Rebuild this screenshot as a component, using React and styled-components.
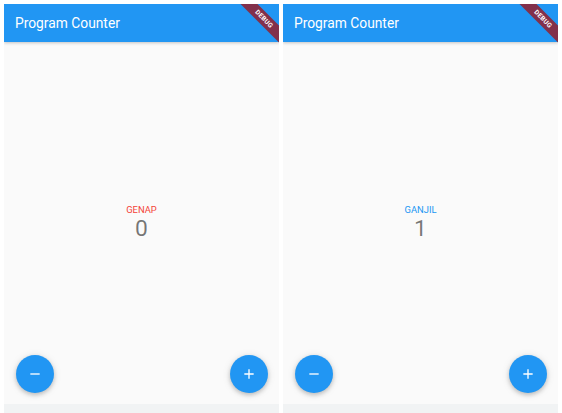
import styled, { createGlobalStyle } from 'styled-components';

const GlobalStyle = createGlobalStyle`
  html, body {
    margin: 0;
    padding: 0;
    background: #ffffff;
    font-family: Roboto, "Noto Sans", sans-serif;
  }
`;

const Screen = styled.div`
  display: flex;
  gap: 4px;
  padding: 4px 4px 0 4px;
  width: 562px;
  height: 413px;
  box-sizing: border-box;
  overflow: hidden;
`;

const Phone = styled.div`
  position: relative;
  width: 275px;
  height: 409px;
  display: flex;
  flex-direction: column;
  overflow: hidden;
  background: #fafafa;
`;

const AppBar = styled.div`
  height: 38px;
  flex-shrink: 0;
  display: flex;
  align-items: center;
  padding-left: 11px;
  background: #2196f3;
  color: #fff;
  font-size: 13.8px;
  font-weight: 400;
  box-shadow: 0 1px 3px rgba(0, 0, 0, 0.22);
  position: relative;
  z-index: 1;
`;

const Body = styled.div`
  position: relative;
  flex: 1;
  display: flex;
  flex-direction: column;
  align-items: center;
  justify-content: center;
`;

const Label = styled.div`
  font-size: 9.4px;
  line-height: 11px;
  color: ${(p) => p.color};
`;

const Count = styled.div`
  font-size: 22.8px;
  line-height: 27px;
  color: rgba(0, 0, 0, 0.54);
`;

const Fab = styled.button`
  position: absolute;
  bottom: 11px;
  ${(p) => (p.side === 'left' ? 'left: 12px;' : 'right: 11px;')}
  width: 38px;
  height: 38px;
  border-radius: 50%;
  border: none;
  padding: 0;
  background: #2196f3;
  display: flex;
  align-items: center;
  justify-content: center;
  box-shadow: 0 2px 4px rgba(0, 0, 0, 0.2), 0 1px 8px rgba(0, 0, 0, 0.1);
`;

const NavStrip = styled.div`
  height: 9px;
  flex-shrink: 0;
  background: #f1f3f4;
`;

const Banner = styled.div`
  position: absolute;
  z-index: 2;
  left: 220px;
  top: 9px;
  width: 80px;
  height: 12px;
  transform: rotate(45deg);
  background: #82304b;
  color: #fff;
  font-size: 6.6px;
  font-weight: 700;
  letter-spacing: 0.2px;
  display: flex;
  align-items: center;
  justify-content: center;
`;

const Minus = () => (
  <svg width="16" height="16" viewBox="0 0 24 24" fill="#fff">
    <path d="M19 13H5v-2h14v2z" />
  </svg>
);

const Plus = () => (
  <svg width="16" height="16" viewBox="0 0 24 24" fill="#fff">
    <path d="M19 13h-6v6h-2v-6H5v-2h6V5h2v6h6v2z" />
  </svg>
);

function CounterPhone({ count }) {
  const even = count % 2 === 0;
  return (
    <Phone>
      <AppBar>Program Counter</AppBar>
      <Body>
        <Label color={even ? '#f44336' : '#2196f3'}>{even ? 'GENAP' : 'GANJIL'}</Label>
        <Count>{count}</Count>
        <Fab side="left"><Minus /></Fab>
        <Fab side="right"><Plus /></Fab>
      </Body>
      <NavStrip />
      <Banner>DEBUG</Banner>
    </Phone>
  );
}

export default function App() {
  return (
    <>
      <GlobalStyle />
      <Screen>
        <CounterPhone count={0} />
        <CounterPhone count={1} />
      </Screen>
    </>
  );
}
